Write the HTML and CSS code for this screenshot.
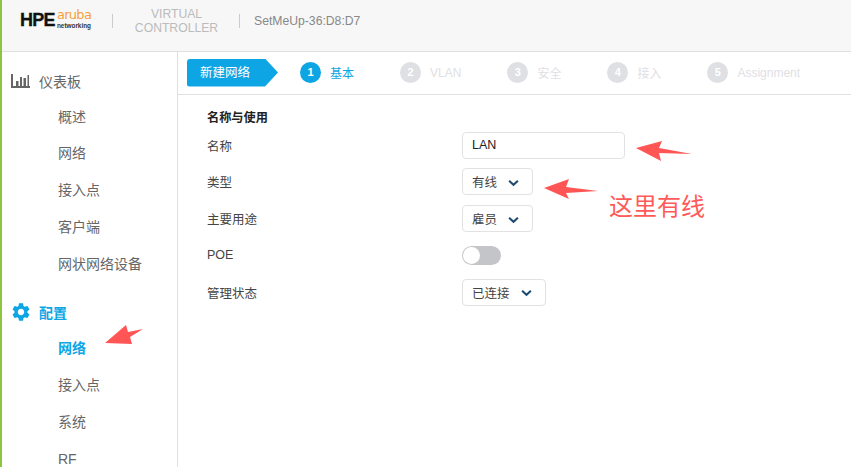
FILE: index.html
```html
<!DOCTYPE html>
<html>
<head>
  <title>Virtual Controller</title>
  <link rel="stylesheet" href="styles.css">
</head>
<body>
  <div class="app">
    <header class="topbar">
      <div class="logo">
        <span class="logo-hpe">HPE</span>
        <span class="logo-aruba">
          <span class="aruba-name">aruba</span>
          <span class="aruba-sub">networking</span>
        </span>
      </div>
      <span class="sep"></span>
      <div class="product">VIRTUAL<br>CONTROLLER</div>
      <span class="sep"></span>
      <div class="device">SetMeUp-36:D8:D7</div>
    </header>

    <div class="layout">
      <nav class="sidebar">
        <div class="nav-head">
          <svg class="nav-icon chart" viewBox="0 0 19 14">
            <path d="M0 0h2v12h17v2H0z" fill="#666"/>
            <path d="M5 7h2.500v5H5zM9 3h2v9H9zM12.500 4H15v8h-2.500zM16.500 1H18v11h-1.500z" fill="#666"/>
          </svg>
          <span>仪表板</span>
        </div>
        <a class="nav-item">概述</a>
        <a class="nav-item">网络</a>
        <a class="nav-item">接入点</a>
        <a class="nav-item">客户端</a>
        <a class="nav-item">网状网络设备</a>
        <div class="nav-head active">
          <svg class="nav-icon" viewBox="2.400 2 19.200 20">
            <path fill="#0ea5e4" d="M19.140 12.940c.04-.3.06-.61.06-.94 0-.32-.02-.64-.07-.94l2.030-1.580c.18-.14.23-.41.12-.61l-1.920-3.320c-.12-.22-.37-.29-.59-.22l-2.390.96c-.5-.38-1.030-.7-1.620-.94l-.36-2.540c-.04-.24-.24-.41-.48-.41h-3.840c-.24 0-.43.17-.47.41l-.36 2.540c-.59.24-1.130.57-1.620.94l-2.390-.96c-.22-.08-.47 0-.59.22L2.740 8.870c-.12.21-.08.47.12.61l2.030 1.580c-.05.3-.09.63-.09.94s.02.64.07.94l-2.030 1.580c-.18.14-.23.41-.12.61l1.920 3.320c.12.22.37.29.59.22l2.390-.96c.5.38 1.030.7 1.620.94l.36 2.540c.05.24.24.41.48.41h3.840c.24 0 .44-.17.47-.41l.36-2.540c.59-.24 1.130-.56 1.620-.94l2.390.96c.22.08.47 0 .59-.22l1.920-3.320c.12-.22.07-.47-.12-.61l-2.010-1.580zM12 15.600c-1.980 0-3.600-1.620-3.600-3.600s1.620-3.600 3.600-3.600 3.600 1.620 3.600 3.600-1.620 3.600-3.600 3.600z"/>
          </svg>
          <span>配置</span>
        </div>
        <a class="nav-item current">网络</a>
        <a class="nav-item">接入点</a>
        <a class="nav-item">系统</a>
        <a class="nav-item">RF</a>
      </nav>

      <main class="content">
        <div class="wizard">
          <div class="wizard-badge">新建网络</div>
          <div class="steps">
            <div class="step active"><span class="step-num">1</span>基本</div>
            <div class="step"><span class="step-num">2</span>VLAN</div>
            <div class="step"><span class="step-num">3</span>安全</div>
            <div class="step"><span class="step-num">4</span>接入</div>
            <div class="step"><span class="step-num">5</span>Assignment</div>
          </div>
        </div>

        <section class="form">
          <h3>名称与使用</h3>
          <div class="form-grid">
            <label>名称</label>
            <div class="input">LAN</div>

            <label>类型</label>
            <div class="select">有线
              <svg class="chevron" viewBox="0 0 12 8"><path d="M1.200 1.500 6 6l4.800-4.500" /></svg>
            </div>

            <label>主要用途</label>
            <div class="select">雇员
              <svg class="chevron" viewBox="0 0 12 8"><path d="M1.200 1.500 6 6l4.800-4.500" /></svg>
            </div>

            <label>POE</label>
            <div class="toggle"><span class="knob"></span></div>

            <label>管理状态</label>
            <div class="select">已连接
              <svg class="chevron" viewBox="0 0 12 8"><path d="M1.200 1.500 6 6l4.800-4.500" /></svg>
            </div>
          </div>
        </section>
      </main>
    </div>
  </div>

  <!-- red annotations drawn on top of the screenshot -->
  <svg class="marks" viewBox="0 0 851 467">
    <polygon points="636,148 662,141 659,148 692,154 659,153 661,161"/>
    <polygon points="544,188 569,179 566,187 598,191 566,193 569,199"/>
    <polygon points="105,343 126,325 128,332 143,329 130,337 132,344"/>
  </svg>
  <div class="note">这里有线</div>
</body>
</html>
```

FILE: styles.css
```css
:root {
  --blue: #0ea5e4;
  --line: #e0e0e0;
  --grey-text: #666;
  --step-grey: #dfe0e4;
}

* {
  margin: 0;
  padding: 0;
  box-sizing: border-box;
  font-family: "Liberation Sans", "Noto Sans CJK SC", sans-serif;
}

body {
  background-color: white;
  width: 851px;
  height: 467px;
  overflow: hidden;
  position: relative;
}

.app {
  height: 467px;
  border-left: 2px solid #8cc63f;
  display: flex;
  flex-direction: column;
}

/* top bar */
.topbar {
  height: 52px;
  flex: none;
  background-color: #f7f7f7;
  border-bottom: 1px solid var(--line);
  display: flex;
  align-items: center;
  padding: 0 0 10px 18px;
}

.logo {
  width: 92px;
  display: flex;
  align-items: center;
  gap: 2px;
}

.logo-hpe {
  font-size: 18px;
  font-weight: bold;
  color: #111;
  letter-spacing: -0.7px;
  -webkit-text-stroke: 0.3px #111;
}

.logo-aruba {
  display: flex;
  flex-direction: column;
  align-items: flex-start;
  width: 34px;
  margin-bottom: 5px;
  white-space: nowrap;
}

.aruba-name {
  font-family: "DejaVu Sans", sans-serif;
  font-size: 13px;
  line-height: 15px;
  letter-spacing: -0.7px;
  color: #f5a03c;
}

.aruba-sub {
  font-size: 6.4px;
  line-height: 7px;
  font-weight: bold;
  color: #333;
}

.sep {
  width: 1px;
  height: 14px;
  background-color: #ccc;
}

.product {
  width: 126px;
  padding-left: 1px;
  text-align: center;
  font-size: 12.2px;
  line-height: 14px;
  color: #bbb;
  white-space: nowrap;
}

.device {
  padding-left: 14px;
  font-size: 12.2px;
  color: #888;
}

/* sidebar */
.layout {
  flex: 1;
  display: flex;
  min-height: 0;
  overflow: hidden;
}

.sidebar {
  width: 176px;
  flex: none;
  border-right: 1px solid var(--line);
  padding-top: 10.5px;
  display: flex;
  flex-direction: column;
}

.nav-head {
  height: 36px;
  flex: none;
  display: flex;
  align-items: center;
  gap: 9px;
  padding-left: 10px;
  font-size: 14px;
  color: var(--grey-text);
}

.nav-head.active {
  color: var(--blue);
  font-weight: bold;
  margin-top: 11px;
}

.nav-icon {
  width: 18px;
  height: 18px;
}

.nav-icon.chart {
  width: 19px;
  height: 14px;
  margin-left: -1px;
}

.nav-item {
  height: 36.9px;
  flex: none;
  line-height: 36.9px;
  padding-left: 56px;
  font-size: 14px;
  color: var(--grey-text);
}

.nav-item.current {
  color: var(--blue);
  font-weight: bold;
}

/* wizard strip */
.content {
  flex: 1;
}

.wizard {
  height: 43px;
  border-bottom: 1px solid var(--line);
  display: flex;
  align-items: center;
  padding-left: 9px;
}

.wizard-badge {
  width: 91px;
  height: 28px;
  line-height: 28px;
  padding-left: 13px;
  margin-bottom: 1px;
  background-color: var(--blue);
  border-radius: 3px 0 0 3px;
  clip-path: polygon(0 0, 78px 0, 100% 50%, 78px 100%, 0 100%);
  color: white;
  font-size: 12.5px;
}

.steps {
  display: flex;
  gap: 46px;
  margin-left: 22px;
  margin-bottom: 1px;
}

.step {
  display: flex;
  align-items: center;
  gap: 9px;
  font-size: 12px;
  color: var(--step-grey);
}

.step.active {
  color: var(--blue);
}

.step-num {
  width: 21px;
  height: 21px;
  border-radius: 50%;
  background-color: var(--step-grey);
  color: white;
  font-size: 11px;
  font-weight: bold;
  text-align: center;
  line-height: 21px;
}

.step.active .step-num {
  background-color: var(--blue);
}

/* form */
.form {
  padding: 15px 0 0 29px;
}

.form h3 {
  font-size: 12.2px;
  line-height: 16px;
  font-weight: bold;
  color: #222;
  margin-bottom: 5.5px;
}

.form-grid {
  display: grid;
  grid-template-columns: 255px auto;
  grid-auto-rows: 27px;
  row-gap: 9.75px;
  justify-items: start;
  align-items: center;
}

.form-grid label {
  font-size: 12.5px;
  color: #444;
}

.input,
.select {
  height: 27px;
  border: 1px solid #e2e2e2;
  border-radius: 4px;
  font-size: 12.5px;
  display: flex;
  align-items: center;
  padding-left: 9px;
  color: #444;
}

.input {
  width: 163px;
  color: #222;
}

.select {
  padding-right: 13px;
  gap: 11px;
}

.chevron {
  width: 11px;
  height: 8px;
  margin-top: 2px;
  fill: none;
  stroke: #1c4a70;
  stroke-width: 2.2;
}

.toggle {
  width: 39px;
  height: 19px;
  border-radius: 10px;
  background-color: #c4c5c9;
  padding: 1px;
}

.knob {
  display: block;
  width: 17px;
  height: 17px;
  border-radius: 50%;
  background-color: white;
}

/* annotations */
.marks {
  position: absolute;
  left: 0;
  top: 0;
  width: 851px;
  height: 467px;
  fill: #ff5555;
  pointer-events: none;
}

.note {
  position: absolute;
  left: 609px;
  top: 190px;
  font-size: 24px;
  line-height: 34px;
  color: #ff5a5a;
}
```
